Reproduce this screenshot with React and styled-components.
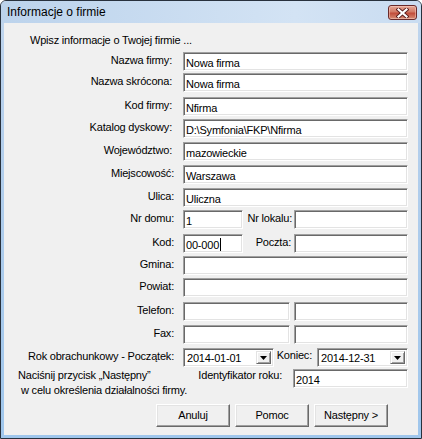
import styled, { createGlobalStyle } from "styled-components";

const GlobalStyle = createGlobalStyle`
  html, body {
    margin: 0;
    padding: 0;
    background: #ffffff;
  }
  body {
    font-family: "Liberation Sans", Arial, sans-serif;
  }
`;

const Window = styled.div`
  width: 422px;
  height: 439px;
  box-sizing: border-box;
  border: 1px solid #28313d;
  border-radius: 6px 6px 0 0;
  background: linear-gradient(#c3d8ef, #b9d1ec 60px, #9fc6ec);
  padding: 0 3px 3px 3px;
  display: flex;
  flex-direction: column;
  overflow: hidden;
`;

const TitleBar = styled.div`
  height: 22px;
  flex: none;
  display: flex;
  align-items: flex-start;
  justify-content: space-between;
  background: linear-gradient(90deg, #bcd3ec, #d3e3f4 70%, #c9dcf1);
  margin: 0 -3px;
  padding: 0 4px 0 6px;
`;

const Title = styled.span`
  font-size: 12px;
  line-height: 22px;
  color: #000;
`;

const CloseButton = styled.div`
  width: 29px;
  height: 15px;
  margin-top: 4px;
  box-sizing: border-box;
  border: 1px solid #6a2a2a;
  border-radius: 3px;
  background: linear-gradient(#e6a896, #d27a66 45%, #c24c3a 55%, #d68c74);
  box-shadow: inset 0 0 0 1px rgba(255, 220, 210, 0.45);
  display: flex;
  align-items: center;
  justify-content: center;
`;

const Body = styled.div`
  flex: 1;
  background: #f0f0f0;
  padding-top: 11px;
  font-size: 11px;
  letter-spacing: -0.2px;
  color: #000;
`;

const Intro = styled.div`
  line-height: 13px;
  padding-left: 26px;
`;

const Row = styled.div`
  display: grid;
  grid-template-columns: 170px 225px;
  column-gap: 9px;
  height: 19px;
  margin-top: ${(p) => p.$mt}px;
  align-items: center;
`;

const Label = styled.div`
  text-align: right;
  white-space: nowrap;
  padding-right: ${(p) => p.$pr || 0}px;
  padding-bottom: 2px;
  line-height: 13px;
`;

const Field = styled.div`
  box-sizing: border-box;
  height: 19px;
  width: ${(p) => (p.$w ? `${p.$w}px` : "100%")};
  flex: none;
  background: #ffffff;
  border-style: solid;
  border-width: 1px;
  border-color: #a0a0a0 #ffffff #ffffff #a0a0a0;
  box-shadow: inset 1px 1px 0 #696969, inset -1px -1px 0 #e3e3e3;
  padding: 2px 2px 0 2px;
  line-height: 14px;
  white-space: nowrap;
  overflow: hidden;
  display: flex;
  align-items: center;
`;

const Caret = styled.span`
  display: inline-block;
  width: 1px;
  height: 13px;
  background: #000;
  margin-left: 1px;
`;

const Split = styled.div`
  display: flex;
  align-items: center;
  gap: ${(p) => p.$gap || 0}px;
`;

const MidLabel = styled.div`
  flex: 1;
  text-align: right;
  white-space: nowrap;
  padding-right: ${(p) => p.$pr || 0}px;
  padding-bottom: ${(p) => p.$pb || 2}px;
  line-height: 13px;
`;

const Combo = styled(Field)`
  justify-content: space-between;
  padding: 2px 2px 2px 3px;
`;

const DropButton = styled.div`
  box-sizing: border-box;
  width: 15px;
  height: 13px;
  background: #f0f0f0;
  border-style: solid;
  border-width: 1px;
  border-color: #e3e3e3 #696969 #696969 #e3e3e3;
  box-shadow: inset 1px 1px 0 #ffffff, inset -1px -1px 0 #a0a0a0;
  display: flex;
  align-items: center;
  justify-content: center;
`;

const Bottom = styled.div`
  display: flex;
  align-items: flex-start;
  height: 31px;
  margin-top: 2px;
  padding: 0 10px 0 14px;
`;

const Note = styled.div`
  width: 170px;
  flex: none;
  margin-top: -1px;
`;

const NoteLine = styled.div`
  line-height: 15px;
  padding-left: ${(p) => p.$indent || 0}px;
  white-space: nowrap;
`;

const IdLabel = styled.div`
  flex: 1;
  text-align: right;
  padding-right: 11px;
  line-height: 13px;
`;

const Buttons = styled.div`
  display: flex;
  justify-content: flex-end;
  gap: 5px;
  margin-top: 4px;
  padding-right: 30px;
`;

const Button = styled.div`
  box-sizing: border-box;
  width: 74px;
  height: 23px;
  background: #f0f0f0;
  border-style: solid;
  border-width: 1px;
  border-color: #ffffff #696969 #696969 #ffffff;
  box-shadow: inset -1px -1px 0 #a0a0a0, inset 1px 1px 0 #e3e3e3;
  display: flex;
  align-items: center;
  justify-content: center;
  line-height: 13px;
`;

function CloseIcon() {
  return (
    <svg width="13" height="10" viewBox="0 0 13 10">
      <path d="M2.5 1.5 L10.5 8.5 M10.5 1.5 L2.5 8.5" stroke="#5a1e1e" strokeWidth="4" strokeLinecap="square" />
      <path d="M2.5 1.5 L10.5 8.5 M10.5 1.5 L2.5 8.5" stroke="#ffffff" strokeWidth="2.2" strokeLinecap="square" />
    </svg>
  );
}

function Arrow() {
  return (
    <svg width="7" height="4" viewBox="0 0 7 4">
      <path d="M0 0 H7 L3.5 4 Z" fill="#000" />
    </svg>
  );
}

const simpleRows = [
  { label: "Nazwa firmy:", value: "Nowa firma", mt: 5, pr: 2 },
  { label: "Nazwa skrócona:", value: "Nowa firma", mt: 2, pr: 2 },
  { label: "Kod firmy:", value: "Nfirma", mt: 5, pr: 2 },
  { label: "Katalog dyskowy:", value: "D:\\Symfonia\\FKP\\Nfirma", mt: 3, pr: 2 },
  { label: "Województwo:", value: "mazowieckie", mt: 4, pr: 2 },
  { label: "Miejscowość:", value: "Warszawa", mt: 4 },
  { label: "Ulica:", value: "Uliczna", mt: 4 },
];

export default function App() {
  return (
    <>
      <GlobalStyle />
      <Window>
        <TitleBar>
          <Title>Informacje o firmie</Title>
          <CloseButton>
            <CloseIcon />
          </CloseButton>
        </TitleBar>
        <Body>
          <Intro>Wpisz informacje o Twojej firmie ...</Intro>

          {simpleRows.map((r) => (
            <Row key={r.label} $mt={r.mt}>
              <Label $pr={r.pr}>{r.label}</Label>
              <Field>{r.value}</Field>
            </Row>
          ))}

          <Row $mt={3}>
            <Label>Nr domu:</Label>
            <Split>
              <Field $w={60}>1</Field>
              <MidLabel $pr={2}>Nr lokalu:</MidLabel>
              <Field $w={114} />
            </Split>
          </Row>

          <Row $mt={5}>
            <Label>Kod:</Label>
            <Split>
              <Field $w={60}>
                00-000
                <Caret />
              </Field>
              <MidLabel $pr={3}>Poczta:</MidLabel>
              <Field $w={114} />
            </Split>
          </Row>

          <Row $mt={3}>
            <Label>Gmina:</Label>
            <Field />
          </Row>

          <Row $mt={3}>
            <Label>Powiat:</Label>
            <Field />
          </Row>

          <Row $mt={5}>
            <Label $pr={-1}>Telefon:</Label>
            <Split $gap={4}>
              <Field $w={107} />
              <Field $w={114} />
            </Split>
          </Row>

          <Row $mt={4}>
            <Label $pr={-1}>Fax:</Label>
            <Split $gap={4}>
              <Field $w={107} />
              <Field $w={114} />
            </Split>
          </Row>

          <Row $mt={4}>
            <Label $pr={-4}>Rok obrachunkowy - Początek:</Label>
            <Split>
              <Combo $w={91}>
                <span>2014-01-01</span>
                <DropButton>
                  <Arrow />
                </DropButton>
              </Combo>
              <MidLabel $pr={5} $pb={4}>Koniec:</MidLabel>
              <Combo $w={91}>
                <span>2014-12-31</span>
                <DropButton>
                  <Arrow />
                </DropButton>
              </Combo>
            </Split>
          </Row>

          <Bottom>
            <Note>
              <NoteLine>Naciśnij przycisk „Następny”</NoteLine>
              <NoteLine $indent={3}>w celu określenia działalności firmy.</NoteLine>
            </Note>
            <IdLabel>Identyfikator roku:</IdLabel>
            <Field $w={115}>2014</Field>
          </Bottom>

          <Buttons>
            <Button>Anuluj</Button>
            <Button>Pomoc</Button>
            <Button>Następny &gt;</Button>
          </Buttons>
        </Body>
      </Window>
    </>
  );
}
